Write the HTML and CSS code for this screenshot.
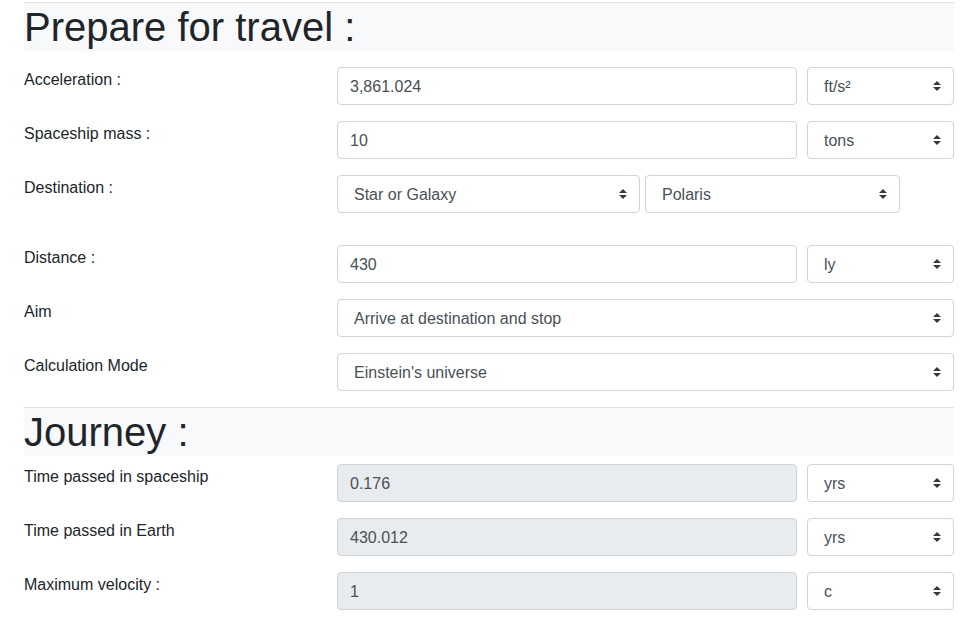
FILE: index.html
```html
<!DOCTYPE html>
<html>
<head>
<meta charset="utf-8">
<link rel="stylesheet" href="styles.css">
</head>
<body>
<div class="page">
  <div class="band band-first"><h1>Prepare for travel :</h1></div>

  <div class="row">
    <label class="lbl">Acceleration :</label>
    <div class="ctrls">
      <input class="fc wide" type="text" value="3,861.024">
      <select class="cs unit"><option>ft/s²</option></select>
    </div>
  </div>

  <div class="row">
    <label class="lbl">Spaceship mass :</label>
    <div class="ctrls">
      <input class="fc wide" type="text" value="10">
      <select class="cs unit"><option>tons</option></select>
    </div>
  </div>

  <div class="row row-tall">
    <label class="lbl">Destination :</label>
    <div class="ctrls ctrls-dest">
      <select class="cs dest1"><option>Star or Galaxy</option></select>
      <select class="cs dest2"><option>Polaris</option></select>
    </div>
  </div>

  <div class="row">
    <label class="lbl">Distance :</label>
    <div class="ctrls">
      <input class="fc wide" type="text" value="430">
      <select class="cs unit"><option>ly</option></select>
    </div>
  </div>

  <div class="row">
    <label class="lbl">Aim</label>
    <div class="ctrls">
      <select class="cs full"><option>Arrive at destination and stop</option></select>
    </div>
  </div>

  <div class="row">
    <label class="lbl">Calculation Mode</label>
    <div class="ctrls">
      <select class="cs full"><option>Einstein's universe</option></select>
    </div>
  </div>

  <div class="band band-second"><h1>Journey :</h1></div>

  <div class="row">
    <label class="lbl">Time passed in spaceship</label>
    <div class="ctrls">
      <input class="fc wide" type="text" value="0.176" disabled>
      <select class="cs unit"><option>yrs</option></select>
    </div>
  </div>

  <div class="row">
    <label class="lbl">Time passed in Earth</label>
    <div class="ctrls">
      <input class="fc wide" type="text" value="430.012" disabled>
      <select class="cs unit"><option>yrs</option></select>
    </div>
  </div>

  <div class="row">
    <label class="lbl">Maximum velocity :</label>
    <div class="ctrls">
      <input class="fc wide" type="text" value="1" disabled>
      <select class="cs unit"><option>c</option></select>
    </div>
  </div>
</div>
</body>
</html>
```

FILE: styles.css
```css
* { box-sizing: border-box; }
html, body { margin: 0; padding: 0; background: #fff; }
body {
  font-family: "Liberation Sans", Arial, sans-serif;
  font-size: 16px;
  line-height: 24px;
  color: #212529;
}
.page {
  width: 930px;
  margin-left: 24px;
  padding-top: 2px;
}
.band {
  border-top: 1px solid #dee2e6;
  background: #f8f9fa;
}
.band h1 {
  margin: 0;
  font-size: 40px;
  font-weight: 400;
  line-height: 48px;
  height: 48px;
}
.band-first { margin-bottom: 16px; }
.band-second { margin-bottom: 8px; }
.row {
  display: grid;
  grid-template-columns: 313px 617px;
  margin-bottom: 16px;
}
.row-tall { margin-bottom: 32px; }
.lbl { display: block; padding-top: 1px; }
.ctrls {
  display: flex;
  gap: 10px;
}
.ctrls-dest { gap: 5px; }
.fc, .cs {
  height: 38px;
  font-family: "Liberation Sans", Arial, sans-serif;
  font-size: 16px;
  color: #495057;
  background-color: #fff;
  border: 1px solid #ced4da;
  border-radius: 4px;
  margin: 0;
}
.fc {
  padding: 7px 12px 5px;
  line-height: 24px;
}
.fc:disabled {
  background-color: #e9ecef;
  opacity: 1;
  color: #495057;
  -webkit-text-fill-color: #495057;
}
.cs {
  -webkit-appearance: none;
  appearance: none;
  padding: 6px 28px 6px 16px;
  background-image: url("data:image/svg+xml;charset=utf8,%3Csvg xmlns='http://www.w3.org/2000/svg' viewBox='0 0 4 5'%3E%3Cpath fill='%23343a40' d='M2 0L0 2h4zm0 5L0 3h4z'/%3E%3C/svg%3E");
  background-repeat: no-repeat;
  background-position: right 12px center;
  background-size: 8px 10px;
}
.wide { width: 460px; }
.unit { width: 147px; }
.full { width: 617px; }
.dest1 { width: 303px; }
.dest2 { width: 255px; }
```
